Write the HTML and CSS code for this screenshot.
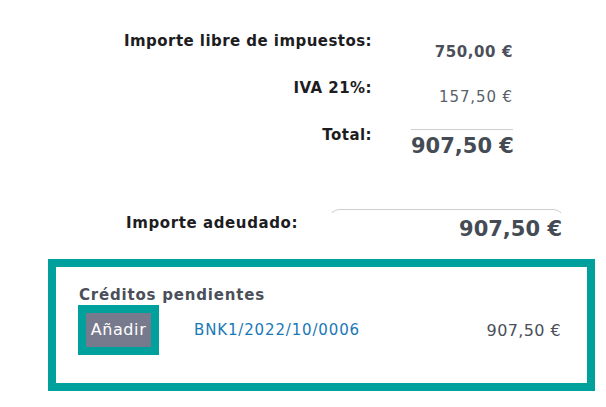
FILE: index.html
```html
<!DOCTYPE html>
<html>
<head>
<meta charset="utf-8">
<link rel="stylesheet" href="styles.css">
</head>
<body>
<div class="page">
  <div class="totals">
    <div class="row">
      <div class="label">Importe libre de impuestos:</div>
      <div class="value semi">750,00 €</div>
    </div>
    <div class="row">
      <div class="label">IVA 21%:</div>
      <div class="value light">157,50 €</div>
    </div>
    <div class="row">
      <div class="label">Total:</div>
      <div class="value big total">907,50 €</div>
    </div>
  </div>
  <div class="due">
    <div class="due-label">Importe adeudado:</div>
    <div class="due-value big">907,50 €</div>
  </div>
  <div class="credits">
    <div class="credits-title">Créditos pendientes</div>
    <div class="credit-row">
      <div class="btn-wrap"><span class="btn">Añadir</span></div>
      <a class="ref">BNK1/2022/10/0006</a>
      <span class="amount">907,50 €</span>
    </div>
  </div>
</div>
</body>
</html>
```
FILE: styles.css
```css
html, body { margin: 0; padding: 0; background: #fff; }
body { font-family: "DejaVu Sans", "Open Sans", sans-serif; color: #212529; }
.page { width: 606px; height: 407px; position: relative; overflow: hidden; }
.totals { padding-top: 31px; }
.row { display: flex; height: 47px; }
.label { width: 372px; text-align: right; font-size: 15px; letter-spacing: 0.45px; font-weight: 700; line-height: 20px; color: #1d1d1f; }
.value { width: 102px; margin-left: 39px; text-align: right; color: #4a4f59; padding-top: 8px; line-height: 22px; white-space: nowrap; }
.semi { font-size: 15px; font-weight: 700; letter-spacing: 0.6px; padding-top: 10px; }
.light { font-size: 15px; font-weight: 400; color: #5a5f69; letter-spacing: 0.9px; }
.big { font-size: 21px; font-weight: 700; color: #454b55; }
.total { border-top: 1px solid #cfcfcf; margin-top: 4px; padding-top: 1px; line-height: 30px; height: 31px; }
.due { display: flex; margin-top: 37px; align-items: flex-start; }
.due-label { margin-left: 126px; width: 202px; font-size: 15px; letter-spacing: 0.6px; font-weight: 700; line-height: 20px; padding-top: 4px; color: #1d1d1f; white-space: nowrap; }
.due-value { width: 233px; text-align: right; border-top: 1px solid #cfcfcf; border-left: 1px solid transparent; border-right: 1px solid transparent; border-radius: 12px; line-height: 34px; padding-top: 2px; padding-right: 2px; white-space: nowrap; }
.credits { position: absolute; left: 48px; top: 259px; width: 531px; height: 116px; border: 8px solid #00a09d; }
.credits-title { margin: 18px 0 0 23px; font-size: 15px; font-weight: 700; letter-spacing: 0.8px; color: #4a4f59; line-height: 20px; }
.credit-row { display: flex; align-items: center; margin-left: 22px; }
.btn-wrap { background: #00a09d; padding: 8px; }
.btn { display: block; width: 65px; height: 34px; background: #777a8c; color: #fff; font-size: 16px; letter-spacing: 0.6px; line-height: 34px; text-align: center; }
.ref { margin-left: 35px; color: #1a78b8; font-size: 15px; letter-spacing: 0.85px; }
.amount { margin-left: auto; margin-right: 26px; color: #4a4f59; font-size: 16px; letter-spacing: 0.4px; }
```
